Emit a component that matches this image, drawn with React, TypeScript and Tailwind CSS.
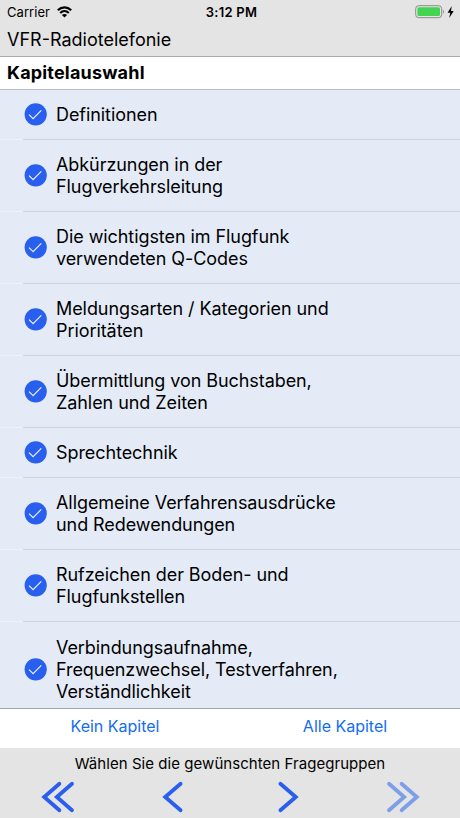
const chapters = [
  { lines: ["Definitionen"], height: "h-[50px]" },
  { lines: ["Abkürzungen in der", "Flugverkehrsleitung"], height: "h-[72px]" },
  { lines: ["Die wichtigsten im Flugfunk", "verwendeten Q-Codes"], height: "h-[72px]" },
  { lines: ["Meldungsarten / Kategorien und", "Prioritäten"], height: "h-[72px]" },
  { lines: ["Übermittlung von Buchstaben,", "Zahlen und Zeiten"], height: "h-[72px]" },
  { lines: ["Sprechtechnik"], height: "h-[50px]" },
  { lines: ["Allgemeine Verfahrensausdrücke", "und Redewendungen"], height: "h-[72px]" },
  { lines: ["Rufzeichen der Boden- und", "Flugfunkstellen"], height: "h-[72px]" },
  { lines: ["Verbindungsaufnahme,", "Frequenzwechsel, Testverfahren,", "Verständlichkeit"], height: "h-24" },
];

function WifiIcon() {
  return (
    <svg width="16" height="12" viewBox="0 0 16 12" fill="none" stroke="#000" strokeWidth="2.2">
      <path d="M.8 4.2C4.6.4 10.4.4 14.2 4.2" />
      <path d="M3.2 7C5.7 4.6 9.3 4.6 11.8 7" />
      <path d="M7.5 11.6 4.9 9c1.5-1.4 3.7-1.4 5.2 0Z" fill="#000" stroke="none" />
    </svg>
  );
}

function BatteryIcon() {
  return (
    <svg width="40" height="14" viewBox="0 0 40 14" fill="none">
      <rect x=".7" y=".7" width="26" height="12" rx="3" stroke="#8b8b8b" />
      <rect x="2.4" y="2.3" width="22.6" height="8.8" rx="1.5" fill="#43d551" />
      <path d="M28 4.8c1.2.5 1.2 3.5 0 4Z" fill="#8b8b8b" />
      <path d="M36.7 1 32.6 7.7h2.7L34.2 13l4.5-7H36Z" fill="#000" />
    </svg>
  );
}

function CheckMark() {
  return (
    <svg width="23" height="23" viewBox="0 0 23 23" fill="none" className="shrink-0">
      <circle cx="11.7" cy="11.3" r="11.1" fill="#295fee" />
      <path d="m5 11.6 4.1 4.1 8.2-8.4" stroke="#e9effc" strokeWidth="1.2" />
    </svg>
  );
}

function Chevron({ double = false, forward = false, faded = false }) {
  return (
    <svg
      width="34"
      height="32"
      viewBox="0 0 34 32"
      fill="none"
      stroke={faded ? "#7d9fe8" : "#295fee"}
      strokeWidth="3.8"
      strokeLinecap="round"
      className={forward ? "-scale-x-100" : ""}
    >
      {double ? (
        <path d="M18.4 2.7 3.2 16 18.4 29.3M31 2.7 15.8 16 31 29.3" />
      ) : (
        <path d="M24.6 2.7 9.2 16 24.6 29.3" />
      )}
    </svg>
  );
}

export default function App() {
  return (
    <div className="flex h-[818px] w-[460px] flex-col overflow-hidden bg-[#e4e4e4] font-['Inter',sans-serif] text-black">
      <header className="h-[57px] border-b border-[#a9a9ab]">
        <div className="grid h-6 grid-cols-3 items-center text-[13px]">
          <div className="flex items-center gap-[7px] pl-[7px]">
            <span className="pt-px tracking-[0.05px]">Carrier</span>
            <WifiIcon />
          </div>
          <span className="pt-px pl-[3px] text-center font-semibold tracking-[0.25px]">3:12 PM</span>
          <div className="flex justify-end pr-[5px]">
            <BatteryIcon />
          </div>
        </div>
        <h1 className="pl-[7px] text-[18px] leading-8">VFR-Radiotelefonie</h1>
      </header>
      <h2 className="h-[33px] border-b border-[#b9bdca] bg-white pl-[7px] text-[18px] leading-8 font-bold tracking-[0.18px]">Kapitelauswahl</h2>
      <ul className="h-[618px] overflow-hidden bg-[#e4ebf7]">
        {chapters.map((chapter) => (
          <li key={chapter.lines[0]} className={`flex ${chapter.height}`}>
            <div className="w-[23px] border-b border-[#edf2fb]" />
            <div className="flex flex-1 items-center gap-[9px] border-b border-[#cdd4e1] pl-px">
              <CheckMark />
              <p className="text-[18px] leading-[22px] tracking-[-0.07px] whitespace-nowrap">
                {chapter.lines.map((line) => (
                  <span key={line} className="block">{line}</span>
                ))}
              </p>
            </div>
          </li>
        ))}
      </ul>
      <div className="grid h-10 shrink-0 grid-cols-2 border-t border-[#a4a8b0] bg-white text-center text-[16px] text-[#156cf3]">
        <button className="pb-[5px]">Kein Kapitel</button>
        <button className="pb-[5px]">Alle Kapitel</button>
      </div>
      <footer className="h-[70px] shrink-0 text-center">
        <p className="h-[33px] text-[15px] leading-8 tracking-[0.05px]">Wählen Sie die gewünschten Fragegruppen</p>
        <nav className="grid grid-cols-4 justify-items-center">
          <Chevron double />
          <Chevron />
          <Chevron forward />
          <Chevron double forward faded />
        </nav>
      </footer>
    </div>
  );
}
